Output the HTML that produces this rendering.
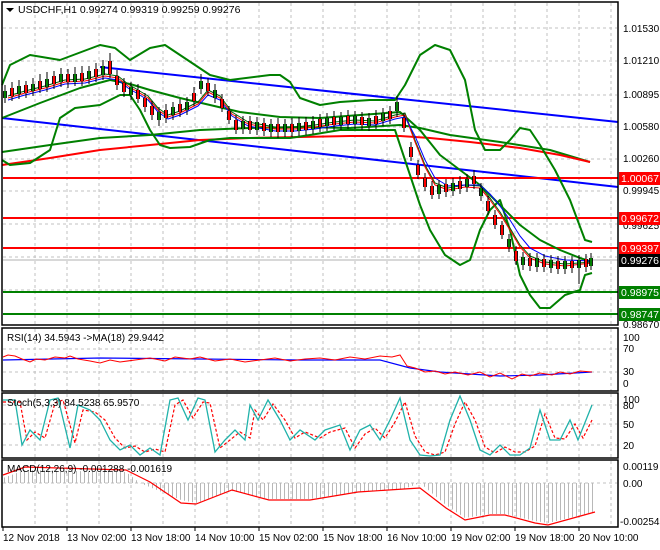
<!DOCTYPE html>
<html><head><meta charset="utf-8"><style>
html,body{margin:0;padding:0;background:#fff;}
svg{display:block;font-family:"Liberation Sans",Arial,sans-serif;font-size:10px;}
</style></head><body>
<svg width="660" height="550" xmlns="http://www.w3.org/2000/svg" xmlns:xlink="http://www.w3.org/1999/xlink">
<defs>
<pattern id="hb" width="4" height="4" patternUnits="userSpaceOnUse"><rect x="0" y="0" width="1" height="4" fill="#b8b8b8"/></pattern>
<path id="gb" d="M5 91V98M19 86V94M33 84V91M47 79V87M61 74V82M75 74V82M89 71V79M103 66V75M131 87V95M159 112V120M173 107V115M187 102V110M201 81V89M215 90V98M243 121V129M257 122V130M271 124V132M285 124V132M299 123V131M313 121V129M327 118V126M341 117V125M355 116V124M369 118V126M383 113V121M397 102V111M439 185V194M453 183V191M467 179V187M481 188V196M509 239V247M523 257V265M537 258V267M551 260V268M565 261V269M579 260V268M591 258V266"/>
<path id="rb" d="M12 88V96M26 85V93M40 81V89M54 76V84M68 74V82M82 73V81M96 69V77M110 61V74M117 76V85M124 83V92M138 90V99M145 98V107M152 106V115M166 110V118M180 104V112M194 93V101M208 83V91M222 99V108M229 111V120M236 120V130M250 121V130M264 123V131M278 124V132M292 124V132M306 122V130M320 119V127M334 117V125M348 116V124M362 117V125M376 116V124M390 111V119M404 118V128M411 147V157M418 165V175M425 178V187M432 186V195M446 184V192M460 181V189M474 176V184M488 201V211M495 215V225M502 225V235M516 251V261M530 258V266M544 259V267M558 261V269M572 261V268M586 259V267"/>
</defs>
<rect width="660" height="550" fill="#fff"/>
<g stroke="#c0c0c0" stroke-dasharray="3,3" stroke-width="1">
<path d="M35 3V325M67 3V325M99 3V325M131 3V325M163 3V325M195 3V325M227 3V325M259 3V325M291 3V325M323 3V325M355 3V325M387 3V325M419 3V325M451 3V325M483 3V325M515 3V325M547 3V325M579 3V325M611 3V325"/>
<path d="M35 329V391M67 329V391M99 329V391M131 329V391M163 329V391M195 329V391M227 329V391M259 329V391M291 329V391M323 329V391M355 329V391M387 329V391M419 329V391M451 329V391M483 329V391M515 329V391M547 329V391M579 329V391M611 329V391"/>
<path d="M35 394V458M67 394V458M99 394V458M131 394V458M163 394V458M195 394V458M227 394V458M259 394V458M291 394V458M323 394V458M355 394V458M387 394V458M419 394V458M451 394V458M483 394V458M515 394V458M547 394V458M579 394V458M611 394V458"/>
<path d="M35 461V527M67 461V527M99 461V527M131 461V527M163 461V527M195 461V527M227 461V527M259 461V527M291 461V527M323 461V527M355 461V527M387 461V527M419 461V527M451 461V527M483 461V527M515 461V527M547 461V527M579 461V527M611 461V527"/>
<path d="M3 28H617M3 61H617M3 95H617M3 127H617M3 159H617M3 191H617M3 224H617M3 257H617M3 290H617M3 349H617M3 372H617M3 405H617M3 424H617M3 445H617M3 483H617"/>
</g>
<!-- MACD histogram -->
<polygon points="3,483 3,478 25,470 126,472 140,483 181,500 196,503 232,491 269,499 310,499 358,492 404,489 420,483 446,505 465,518 490,514 505,514 535,521 548,523 595,512 595,483" fill="url(#hb)"/>
<!-- main lines -->
<path d="M2 118L618 187M100 67L618 122" stroke="#0000ff" stroke-width="2"/>
<path d="M3 178H618M3 218H618M3 248H618" stroke="#ff0000" stroke-width="2"/>
<path d="M3 292H618M3 314H618" stroke="#008000" stroke-width="2"/>
<path d="M3 260H618" stroke="#b0b0b0"/>
<g fill="none" stroke-width="2" stroke-linejoin="round">
<polyline stroke="#008000" points="2,152 50,145 100,138 150,135 200,130 250,128 300,127 350,128 400,125 420,128 450,135 500,142 550,150 590,162"/>
<polyline stroke="#ff0000" points="2,165 50,158 100,150 150,145 200,140 250,138 300,137 350,136 400,136 430,138 470,142 520,148 560,155 590,162"/>
<polyline stroke="#008000" points="2,85 10,65 30,55 60,60 100,45 115,48 130,60 150,48 165,45 180,55 195,65 210,75 230,80 270,75 280,75 290,82 300,98 320,105 340,102 370,100 395,100 405,85 420,55 435,45 450,50 465,80 475,130 485,150 500,150 510,140 520,128 530,130 540,145 555,170 570,200 585,240 592,242"/>
<polyline stroke="#008000" points="2,160 10,165 30,163 50,150 60,118 75,108 100,105 120,95 130,95 140,110 150,130 160,145 170,148 190,147 210,140 230,138 260,138 290,138 310,135 340,130 370,130 395,130 410,175 420,205 430,230 445,255 460,265 470,260 480,230 490,210 500,200 510,230 520,275 530,295 540,308 550,308 565,295 580,290 585,275 592,273"/>
<polyline stroke="#008000" points="2,118 40,103 80,88 110,80 130,84 150,90 180,98 210,105 240,112 280,117 320,118 360,115 400,112 420,130 440,155 460,170 480,185 500,205 520,225 540,240 560,250 580,258 592,262"/>
</g>
<g fill="none" stroke-width="1" stroke-linejoin="round">
<polyline stroke="#006400" points="8,96 25,91 45,86 65,80 85,79 105,74 118,76 128,84 148,96 158,108 168,115 180,111 198,102 208,90 220,96 232,112 248,122 275,127 295,127 315,125 335,122 355,120 375,121 395,115 405,113 415,140 425,165 435,183 448,188 465,185 480,186 490,198 500,212 510,228 520,245 530,256 545,262 565,264 592,262"/>
<polyline stroke="#ff0000" points="8,98 25,93 45,88 65,82 85,81 105,76 118,78 128,86 148,98 158,110 168,117 180,113 198,104 208,92 220,98 232,114 248,124 275,129 295,129 315,127 335,124 355,122 375,123 395,117 405,115 415,142 425,167 435,185 448,190 465,187 480,188 490,200 500,214 510,230 520,247 530,258 545,264 565,266 592,263"/>
<polyline stroke="#0000ff" points="8,100 25,95 45,90 65,84 85,83 105,78 118,80 128,88 148,100 158,112 168,119 180,115 198,106 208,95 220,100 232,116 248,126 275,131 295,131 315,129 335,126 355,124 375,125 395,119 405,117 415,136 425,160 435,178 448,186 465,185 480,185 490,194 500,206 510,220 520,236 530,248 545,256 565,260 592,261"/>
</g>
<!-- candles -->
<path stroke="#000" stroke-width="1" d="M5 85V103M12 82V101M19 80V99M26 81V98M33 78V96M40 74V93M47 72V92M54 71V89M61 68V87M68 69V88M75 67V86M82 66V86M89 66V84M96 63V82M103 60V80M110 53V78M117 70V90M124 78V97M131 82V100M138 84V103M145 93V112M152 101V120M159 107V126M166 104V123M173 102V120M180 99V117M187 97V115M194 87V106M201 74V94M208 78V96M215 84V103M222 94V112M229 106V124M236 115V134M243 116V134M250 116V134M257 117V135M264 118V136M271 119V137M278 118V138M285 119V137M292 118V137M299 117V136M306 117V135M313 116V134M320 114V132M327 113V131M334 111V130M341 112V130M348 110V129M355 111V129M362 112V130M369 113V131M376 110V129M383 108V126M390 106V124M397 96V117M404 113V132M411 142V161M418 160V179M425 173V191M432 181V199M439 180V199M446 179V197M453 178V196M460 176V194M467 174V192M474 170V189M481 183V201M488 196V215M495 210V229M502 221V239M509 234V252M516 246V265M523 252V270M530 253V271M537 253V272M544 254V272M551 255V273M558 256V274M565 256V274M572 256V273M579 255V284M586 254V272M591 253V270"/>
<use xlink:href="#gb" stroke="#000" stroke-width="3.8"/>
<use xlink:href="#rb" stroke="#000" stroke-width="3.8"/>
<use xlink:href="#gb" stroke="#008000" stroke-width="2"/>
<use xlink:href="#rb" stroke="#ff0000" stroke-width="2"/>
<!-- RSI -->
<polyline fill="none" stroke="#0000ff" stroke-width="1.2" points="3,360 100,358 200,359 300,360 380,360 410,368 440,372 500,376 540,375 592,372"/>
<polyline fill="none" stroke="#ff0000" stroke-width="1" points="3,357 8,355 15,356 22,359 30,362 36,359 45,360 55,357 65,358 70,356 78,359 90,361 100,363 110,360 120,362 135,360 150,358 165,361 175,357 190,359 200,357 215,361 230,359 245,362 260,360 275,358 290,361 305,359 320,358 335,360 350,357 365,359 380,356 392,357 400,355 407,366 415,368 425,372 435,371 445,374 455,372 468,375 480,372 490,377 500,373 512,379 522,374 530,376 540,373 552,375 560,372 570,374 580,371 592,372"/>
<!-- Stoch -->
<polyline fill="none" stroke="#ff0000" stroke-width="1.2" stroke-dasharray="3,2" points="3,402 20,402 27,440 35,432 45,438 55,403 63,400 75,443 83,410 95,412 105,420 115,438 125,448 135,446 145,452 155,449 165,452 175,405 183,400 193,418 203,402 210,403 220,448 230,440 240,432 250,438 255,410 263,420 273,404 285,420 295,438 305,432 320,438 330,432 345,428 355,448 365,434 375,428 385,438 395,422 405,402 415,436 425,452 435,455 445,452 455,424 465,402 475,420 485,447 495,453 505,447 515,452 525,452 535,446 545,414 555,438 565,439 575,424 583,438 592,420"/>
<polyline fill="none" stroke="#20b2aa" stroke-width="1.3" points="3,400 15,400 22,445 30,430 40,440 50,400 58,398 70,448 78,405 90,410 100,420 110,440 120,450 130,445 140,455 150,448 160,455 170,400 178,398 188,420 198,398 205,400 215,452 225,440 235,430 245,440 250,405 258,420 268,400 280,420 290,440 300,430 315,440 325,430 340,425 350,450 360,430 370,425 380,440 390,420 400,398 410,440 420,455 430,456 440,455 450,420 460,396 470,420 480,450 490,455 500,445 510,455 520,455 530,448 540,410 550,440 560,440 570,420 578,440 592,405"/>
<!-- MACD -->
<polyline fill="none" stroke="#ff0000" stroke-width="1.2" points="3,475 25,467 126,470 150,482 181,503 196,504 232,490 269,500 310,500 358,492 404,489 420,488 446,508 465,520 490,515 505,515 535,523 548,525 595,512"/>
<g fill="none" stroke="#000" stroke-width="1.5">
<rect x="2" y="2" width="616" height="323"/>
<rect x="2" y="328" width="616" height="63"/>
<rect x="2" y="393" width="616" height="65"/>
<rect x="2" y="460" width="616" height="67"/>
</g>
<path d="M6 8 L14 8 L10 12 Z" fill="#000"/>
<text x="18" y="13" font-size="10.5">USDCHF,H1  0.99274 0.99319 0.99259 0.99276</text>
<text x="7" y="341">RSI(14) 34.5943  -&gt;MA(18) 29.9442</text>
<text x="7" y="406">Stoch(5,3,3) 84.5238 65.9570</text>
<text x="7" y="472">MACD(12,26,9) -0.001288 -0.001619</text>
<g font-size="10" fill="#000">
<text x="623" y="32">1.01530</text>
<text x="623" y="64">1.01210</text>
<text x="623" y="98">1.00895</text>
<text x="623" y="130">1.00580</text>
<text x="623" y="162">1.00260</text>
<text x="623" y="194">0.99945</text>
<text x="623" y="229">0.99625</text>
<text x="623" y="328">0.98670</text>
<text x="623" y="341">100</text>
<text x="623" y="352">70</text>
<text x="623" y="375">30</text>
<text x="623" y="387">0</text>
<text x="623" y="403">100</text>
<text x="623" y="409">80</text>
<text x="623" y="428">50</text>
<text x="623" y="449">20</text>
<text x="623" y="470">0.00119</text>
<text x="623" y="487">0.00</text>
<text x="620" y="525">-0.002543</text>
</g>
<g font-size="10.5" fill="#fff">
<rect x="619" y="172" width="41" height="13" fill="#ff0000"/><text x="621" y="182">1.00067</text>
<rect x="619" y="212" width="41" height="13" fill="#ff0000"/><text x="621" y="222">0.99672</text>
<rect x="619" y="242" width="41" height="13" fill="#ff0000"/><text x="621" y="252">0.99397</text>
<rect x="619" y="254" width="41" height="13" fill="#000"/><text x="621" y="264">0.99276</text>
<rect x="619" y="286" width="41" height="13" fill="#008000"/><text x="621" y="296">0.98975</text>
<rect x="619" y="308" width="41" height="13" fill="#008000"/><text x="621" y="318">0.98747</text>
</g>
<path stroke="#000" d="M3 527V531M67 527V531M131 527V531M195 527V531M259 527V531M323 527V531M387 527V531M451 527V531M515 527V531M579 527V531"/>
<g font-size="10">
<text x="3" y="541">12 Nov 2018</text>
<text x="67" y="541">13 Nov 02:00</text>
<text x="131" y="541">13 Nov 18:00</text>
<text x="195" y="541">14 Nov 10:00</text>
<text x="259" y="541">15 Nov 02:00</text>
<text x="323" y="541">15 Nov 18:00</text>
<text x="387" y="541">16 Nov 10:00</text>
<text x="451" y="541">19 Nov 02:00</text>
<text x="515" y="541">19 Nov 18:00</text>
<text x="579" y="541">20 Nov 10:00</text>
</g>
</svg>
</body></html>
